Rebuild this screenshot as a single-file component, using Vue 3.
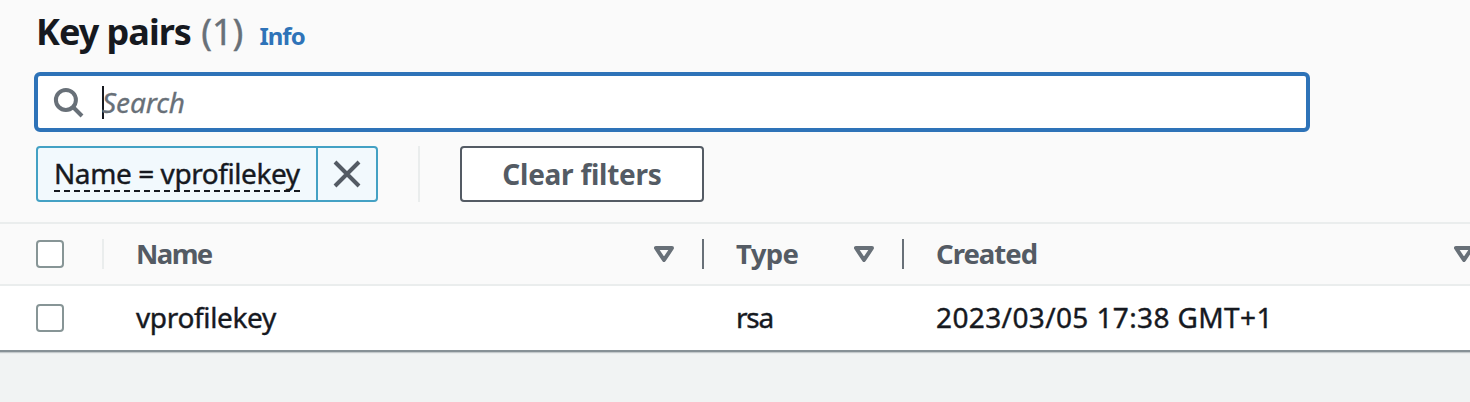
<script setup>
const columns = [
  { id: 'name', label: 'Name' },
  { id: 'type', label: 'Type' },
  { id: 'created', label: 'Created' },
]
const rows = [{ name: 'vprofilekey', type: 'rsa', created: '2023/03/05 17:38 GMT+1' }]
</script>

<template>
  <main class="page">
    <section class="panel">
      <header class="title">
        <h1><span class="heading">Key pairs</span> <span class="count">(1)</span></h1>
        <a class="info">Info</a>
      </header>
      <div class="search">
        <svg class="magnifier" width="32" height="32" viewBox="0 0 32 32">
          <circle cx="13.9" cy="13.9" r="10" />
          <path d="M21 21L30 30" />
        </svg>
        <span class="caret"></span>
        <span class="placeholder">Search</span>
      </div>
      <div class="filters">
        <div class="token">
          <div class="token-label"><span class="token-text">Name = vprofilekey</span></div>
          <div class="dismiss">
            <svg width="28" height="28" viewBox="0 0 28 28"><path d="M2 2L26 26M26 2L2 26" /></svg>
          </div>
        </div>
        <div class="divider"></div>
        <button class="clear"><span>Clear filters</span></button>
      </div>
      <div class="row head">
        <div class="select"><i class="box"></i></div>
        <div v-for="c in columns" :key="c.id" class="cell" :class="c.id">
          <span class="text">{{ c.label }}</span>
          <svg class="sort" width="20" height="16" viewBox="0 0 20 16">
            <path d="M2 2H18L10 14Z" />
          </svg>
        </div>
      </div>
      <div v-for="r in rows" :key="r.name" class="row body">
        <div class="select"><i class="box"></i></div>
        <div v-for="c in columns" :key="c.id" class="cell" :class="c.id">
          <span class="text">{{ r[c.id] }}</span>
        </div>
      </div>
    </section>
  </main>
</template>

<style>
body { background: #f1f3f3; overflow: hidden; }
</style>

<style scoped>
* { box-sizing: border-box; }
.page {
  width: 1470px;
  height: 402px;
  overflow: hidden;
  background: #f1f3f3;
  font-family: "Noto Sans", sans-serif;
  font-size: 28px;
  color: #16191f;
  white-space: nowrap;
}
.panel {
  height: 352px;
  background: #fafafa;
  border-bottom: 2px solid #879196;
  box-shadow: 0 1px 1px #c4c9cb;
}
.title {
  display: flex;
  align-items: baseline;
  height: 72px;
  padding-left: 36px;
  line-height: 64px;
}
h1 { margin: 0; font-size: 36px; font-weight: 700; }
.heading { letter-spacing: -1px; }
.count { margin-left: 1px; font-weight: 400; color: #687078; -webkit-text-stroke: 0.4px #687078; }
.info { margin-left: 16px; font-size: 24px; font-weight: 700; color: #2e73b8; letter-spacing: -1px; }
.search {
  display: flex;
  align-items: center;
  width: 1276px;
  height: 60px;
  margin-left: 34px;
  padding-left: 14px;
  background: #fff;
  border: 4px solid #2e73b8;
  border-radius: 6px;
}
svg { display: block; fill: none; flex: none; }
.magnifier { stroke: #687078; stroke-width: 4; }
.caret { width: 2px; height: 33px; margin-left: 18px; background: #16191f; }
.placeholder {
  margin-left: -2px;
  font-style: italic;
  color: #687078;
  line-height: 52px;
  letter-spacing: -0.1px;
  -webkit-text-stroke: 0.3px #687078;
}
.filters { display: flex; height: 56px; margin: 14px 0 20px 36px; }
.token {
  display: flex;
  width: 342px;
  background: #f2f9fd;
  border: 2px solid #44a1c4;
  border-radius: 4px;
}
.token-label { width: 280px; padding: 8px 0 0 16px; border-right: 2px solid #44a1c4; }
.token-text {
  display: block;
  width: 246px;
  height: 36px;
  line-height: 35px;
  letter-spacing: -0.42px;
  -webkit-text-stroke: 0.4px #16191f;
  background: repeating-linear-gradient(90deg, #16191f 0 6px, transparent 6px 10px) 0 100% / 100% 2px no-repeat;
}
.dismiss { display: flex; flex: 1; align-items: center; justify-content: center; }
.dismiss svg { stroke: #545b64; stroke-width: 4; }
.divider { width: 2px; margin: 0 40px; background: #eaeded; }
.clear {
  width: 244px;
  padding: 0;
  background: #fff;
  border: 2px solid #545b64;
  border-radius: 4px;
  color: #545b64;
  font: 700 28px/50px "Noto Sans", sans-serif;
  letter-spacing: -0.25px;
}
.row { display: flex; align-items: center; padding-left: 36px; }
.head {
  height: 64px;
  border-top: 2px solid #eaeded;
  border-bottom: 2px solid #eaeded;
  color: #545b64;
  font-weight: 700;
}
.body { height: 64px; background: #fff; }
.select { flex: none; width: 68px; height: 30px; padding-top: 1px; }
.head .select { border-right: 2px solid #eaeded; }
.box { display: block; width: 28px; height: 28px; background: #fff; border: 2px solid #879596; border-radius: 4px; }
.cell { display: flex; flex: none; align-items: center; justify-content: space-between; height: 30px; padding: 0 28px 0 32px; }
.text { line-height: 30px; margin-top: -1px; }
.head .text { font-size: 27.5px; letter-spacing: -1px; }
.body .text { margin-top: -2px; -webkit-text-stroke: 0.4px #16191f; }
.name { width: 600px; }
.type { width: 200px; }
.created { width: 598px; }
.head .name .text { letter-spacing: -1.6px; }
.head .type .text { letter-spacing: -0.6px; }
.body .name .text { letter-spacing: -0.35px; }
.body .type .text { letter-spacing: -1.2px; }
.body .created .text { letter-spacing: 0.38px; }
.head .name, .head .type { border-right: 2px solid #687078; }
.sort { stroke: #687078; stroke-width: 4; stroke-linejoin: round; }
</style>
